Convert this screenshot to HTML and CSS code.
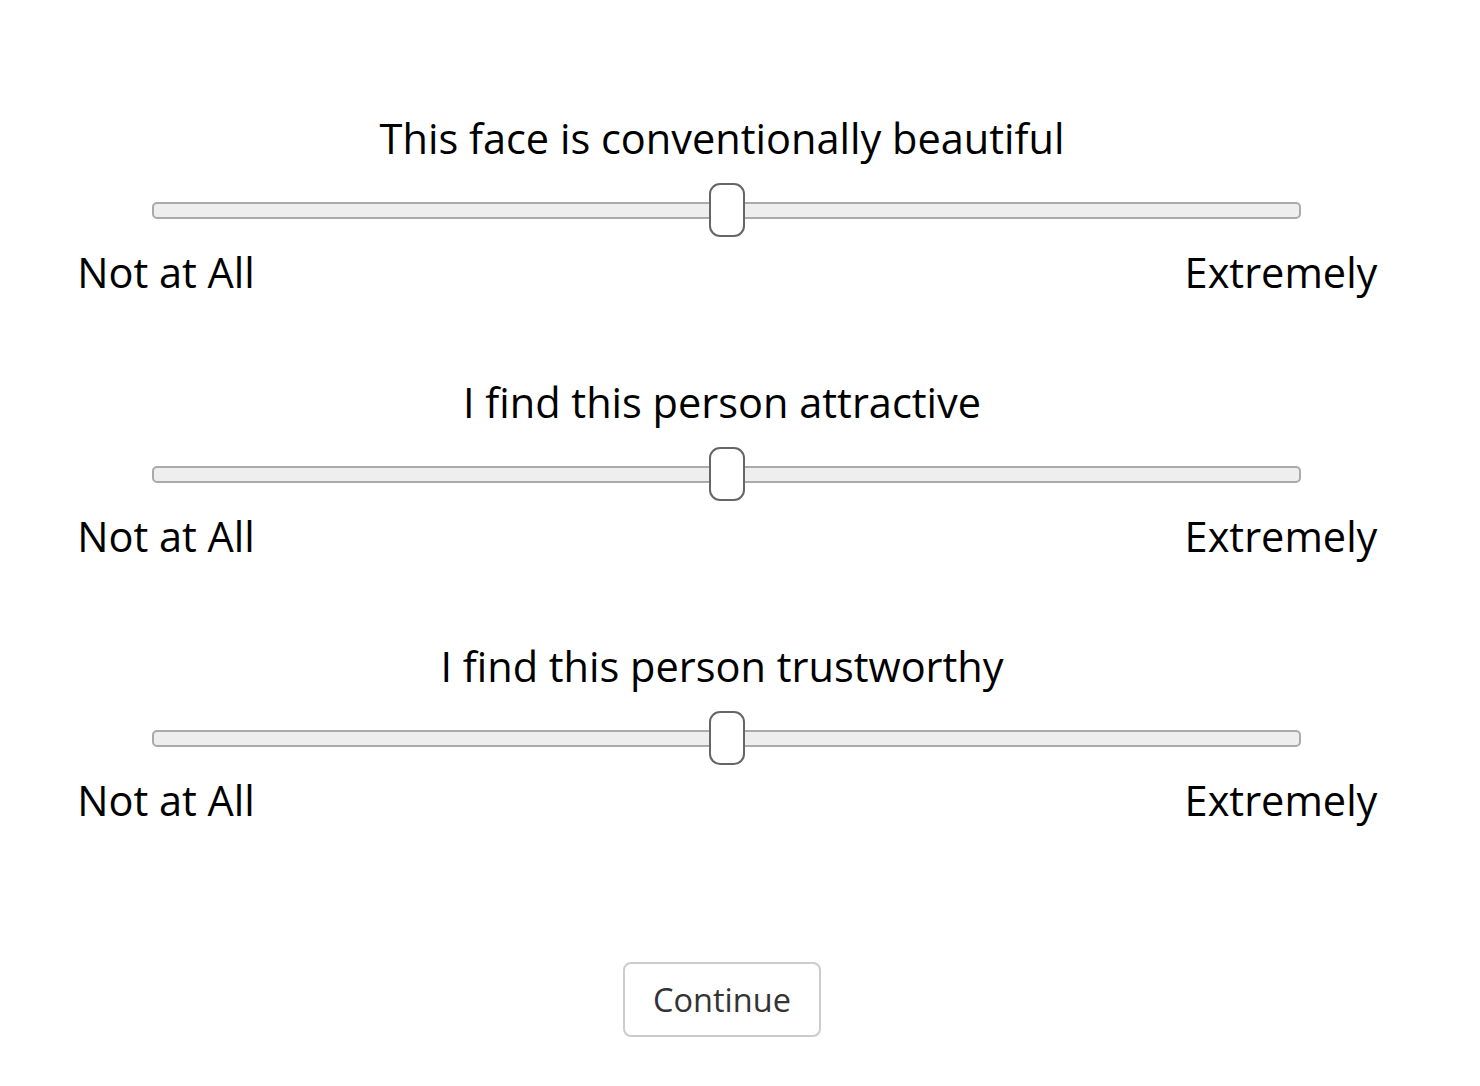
FILE: index.html
```html
<!DOCTYPE html>
<html lang="en">
<head>
<meta charset="utf-8">
<title>Ratings</title>
<link rel="stylesheet" href="styles.css">
</head>
<body>
<main class="page">
  <section class="question">
    <p class="prompt">This face is conventionally beautiful</p>
    <div class="scale">
      <input class="slider" type="range" min="0" max="100" value="50" aria-label="This face is conventionally beautiful">
      <div class="labels">
        <span class="anchor"><span class="label">Not at All</span></span>
        <span class="anchor"><span class="label">Extremely</span></span>
      </div>
    </div>
  </section>
  <section class="question">
    <p class="prompt">I find this person attractive</p>
    <div class="scale">
      <input class="slider" type="range" min="0" max="100" value="50" aria-label="I find this person attractive">
      <div class="labels">
        <span class="anchor"><span class="label">Not at All</span></span>
        <span class="anchor"><span class="label">Extremely</span></span>
      </div>
    </div>
  </section>
  <section class="question">
    <p class="prompt">I find this person trustworthy</p>
    <div class="scale">
      <input class="slider" type="range" min="0" max="100" value="50" aria-label="I find this person trustworthy">
      <div class="labels">
        <span class="anchor"><span class="label">Not at All</span></span>
        <span class="anchor"><span class="label">Extremely</span></span>
      </div>
    </div>
  </section>
  <div class="actions">
    <button class="btn" type="button">Continue</button>
  </div>
</main>
</body>
</html>
```

FILE: styles.css
```css
html, body {
  margin: 0;
  padding: 0;
  background: #ffffff;
}

body {
  font-family: "Open Sans", "DejaVu Sans", sans-serif;
  font-size: 41.5px;
  line-height: 1.6;
  color: #000000;
}

.page {
  width: 1444px;
  padding-top: 109px;
  text-align: center;
}

.question {
  margin-bottom: 72px;
}

.question:last-of-type {
  margin-bottom: 133px;
}

.prompt {
  margin: 0 0 16px 0;
  height: 58px;
  line-height: 58px;
}

.scale {
  margin-left: 152px;
  width: 1149px;
}

.slider {
  -webkit-appearance: none;
  appearance: none;
  display: block;
  width: 1149px;
  height: 54px;
  margin: 0;
  padding: 0;
  background: transparent;
}

.slider:focus {
  outline: none;
}

.slider::-webkit-slider-runnable-track {
  box-sizing: border-box;
  height: 17px;
  background: #eeeeee;
  border: 2px solid #aaaaaa;
  border-radius: 5px;
}

.slider::-webkit-slider-thumb {
  -webkit-appearance: none;
  appearance: none;
  box-sizing: border-box;
  width: 36px;
  height: 54px;
  margin-top: -20.5px;
  border: 2px solid #666666;
  border-radius: 11px;
  background: #ffffff;
}

.labels {
  display: flex;
  justify-content: space-between;
  margin-top: 6px;
  padding: 0 20px 0 14px;
  height: 58px;
  line-height: 58px;
}

.anchor {
  width: 0;
  display: flex;
  justify-content: center;
}

.label {
  white-space: nowrap;
}

.actions {
  display: flex;
  justify-content: center;
}

.btn {
  font-family: "Open Sans", "DejaVu Sans", sans-serif;
  font-size: 32.5px;
  line-height: 47px;
  color: #333333;
  background: #ffffff;
  border: 2px solid #cccccc;
  border-radius: 8px;
  padding: 12px 28px;
  margin: 0;
  cursor: pointer;
}
```
